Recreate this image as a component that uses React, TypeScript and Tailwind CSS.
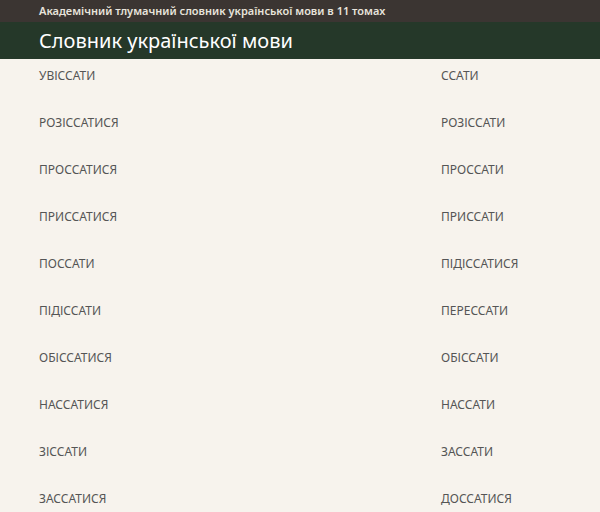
export default function App() {
  const rows = [
    ["УВІССАТИ", "ССАТИ"],
    ["РОЗІССАТИСЯ", "РОЗІССАТИ"],
    ["ПРОССАТИСЯ", "ПРОССАТИ"],
    ["ПРИССАТИСЯ", "ПРИССАТИ"],
    ["ПОССАТИ", "ПІДІССАТИСЯ"],
    ["ПІДІССАТИ", "ПЕРЕССАТИ"],
    ["ОБІССАТИСЯ", "ОБІССАТИ"],
    ["НАССАТИСЯ", "НАССАТИ"],
    ["ЗІССАТИ", "ЗАССАТИ"],
    ["ЗАССАТИСЯ", "ДОССАТИСЯ"],
  ];
  return (
    <div className="h-[512px] overflow-hidden bg-[#f7f3ed]">
      <div className="h-[22px] bg-[#3b3532] px-[39px] flex items-center text-[11px] font-semibold text-[#e8e4dc] [font-family:'Open_Sans',sans-serif]">
        Академічний тлумачний словник української мови в 11 томах
      </div>
      <div className="h-[37px] bg-[#253829] px-[39px] flex items-center text-[20px] text-white [font-family:'Open_Sans',sans-serif]">
        Словник української мови
      </div>
      <div className="pt-[8px] [font-family:'Liberation_Serif',serif] text-[12px] text-[#555]">
        {rows.map(([a, b]) => (
          <div key={a} className="h-[47px] flex px-[39px]">
            <div className="w-[402px]">{a}</div>
            <div>{b}</div>
          </div>
        ))}
      </div>
    </div>
  );
}
